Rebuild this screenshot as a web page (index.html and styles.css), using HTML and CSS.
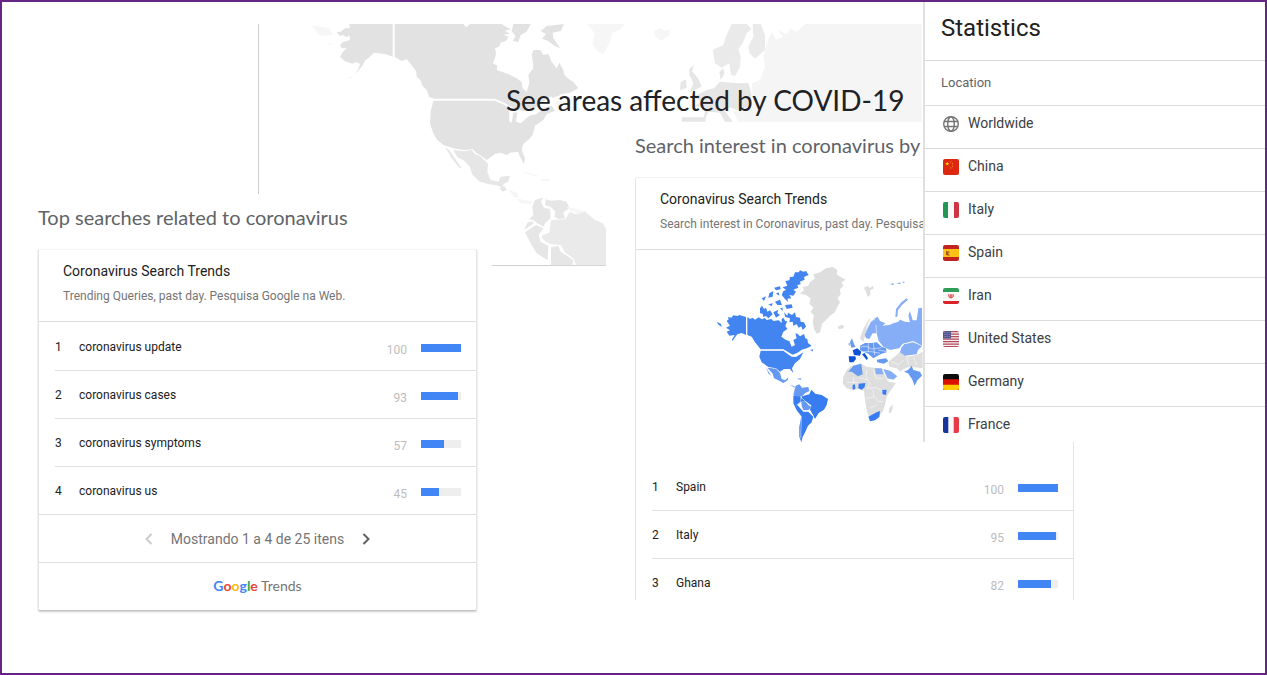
FILE: index.html
```html
<!DOCTYPE html>
<html lang="en">
<head>
<meta charset="utf-8">
<title>COVID-19 search trends</title>
<link rel="stylesheet" href="styles.css">
</head>
<body>
<div class="page">
  <svg class="backdrop" viewBox="24 72 1992 726" aria-hidden="true">
    <path class="line" d="M25.500 72V582M726 796.500H1068"/>
    <g class="land">
      <path d="M298 72H428V170L405 162 385 160 372 158 358 172 345 182 335 200 314 224 326 205 330 192 318 186 308 191 285 184 270 170 279 155 290 144 275 145 270 135 280 126 300 120 298 105 290 112 279 105 270 108 260 96 272 95 285 85 300 84Z"/>
      <path d="M434 72H640L648 82 660 72H755L782 88 765 92 779 101 760 104 776 110 768 122 752 128 747 140 735 145 738 160 735 175 728 190 742 197 740 210 775 222 800 235 815 246 818 265 830 275 838 248 835 225 850 205 848 182 845 165 850 150 870 150 880 165 895 162 905 185 920 205 928 188 940 210 943 225 960 240 970 245 985 265 960 278 930 283 900 290 872 312 850 329 820 334 785 322 762 308 735 296H555L538 292 530 270 518 258 511 240 500 230 498 212 480 190 470 178 455 183 434 171Z"/>
      <path d="M550 302H735L762 314 777 322 778 365 785 368 790 338 802 337 798 365 812 370 838 347 858 343 885 322 905 317 916 332 890 342 880 360 855 377 848 405 838 417 820 432 815 450 825 475 822 492 810 470 805 455 780 458 772 465 750 458 735 462 710 480 690 465 680 460 668 448 640 450 610 445 580 435 560 418 548 395 540 370 542 335Z"/>
      <path d="M790 72H842L830 95 812 105 805 126 788 122 797 108 785 94ZM872 93L890 78 942 72 932 93 908 98 910 115 931 145 915 138 893 122 876 116 888 102ZM895 280L918 274 931 285 908 294Z"/>
      <path class="mid" d="M610 450L640 454 665 450 676 463 690 468 708 485 714 492 712 515 722 540 745 545 752 530 780 527 775 545 762 551 755 562 740 556 715 552 690 545 668 525 662 510 660 500 640 480 622 472ZM585 440L597 450 618 480 635 505 628 503 605 475ZM748 565L762 557 770 570 758 575Z"/>
      <path class="pale" d="M775 568L802 580 806 593 792 590ZM800 596L845 603 844 613 812 610ZM820 513L865 527 860 530 825 519ZM870 537L902 538 900 543 875 543ZM184 76L238 84 250 105 212 108ZM225 126L252 132 240 134ZM285 238L313 226 300 235Z"/>
      <path class="mid" d="M855 600L880 592 873 605 882 623 900 627 902 655 885 670 880 680 860 668 848 659 838 658 850 645 847 620ZM887 598L904 602 930 600 950 605 958 625 940 637 945 655 925 657 914 650 916 634 903 622 885 615ZM832 668L846 664 852 670 830 685 822 690Z"/>
      <path class="mid" d="M825 697L858 675 880 685 866 705 872 725 895 737 893 781 860 760 845 735ZM903 742L925 737 932 755 970 780 968 796H903Z"/>
      <path class="soft" d="M903 660L945 658 960 635 975 642 990 640 1005 634 1014 643 1035 660 1058 670 1068 686V796H978L970 775 945 757 932 735 900 732 892 728 875 715 878 705 898 698Z"/>
      <path class="pale" d="M950 622L972 625 1002 634 990 642 964 633ZM1012 72H1125L1112 88 1087 100 1080 125 1060 162 1042 154 1027 130 1035 102ZM1210 95L1228 84 1244 92 1258 88 1258 106 1234 122 1218 112ZM908 305L950 302 975 295 960 308 924 318Z"/>
      <path class="faint" d="M1550 130L1565 95 1578 118 1600 112 1580 87 1608 102 1620 87 1640 95 1665 72H2016V365H1465L1450 335 1510 320 1505 250 1530 240 1545 200 1540 170Z"/>
      <path class="soft" d="M1445 72H1490L1505 86 1490 100 1478 130 1465 147 1472 170 1470 200 1455 228 1443 225 1438 190 1415 203 1395 190 1388 150 1420 135 1430 105ZM1508 72H1532L1545 105 1545 150 1515 176 1498 160 1495 140 1510 110Z"/>
      <path class="mid" d="M1318 207L1332 195 1326 213 1344 235 1355 260 1320 277 1330 248 1318 225ZM1292 246L1308 238 1310 264 1290 270ZM1408 215L1420 205 1423 222 1412 240ZM1330 290L1370 270 1392 265 1410 245 1465 250 1495 249 1505 285 1495 320 1460 330 1440 322 1425 333 1448 365H1425L1410 338 1375 335 1368 350 1366 365H1295V352H1362L1367 323 1335 318 1352 305Z"/>
    </g>
  </svg>

  <header class="masthead"><h1>See areas affected by COVID-19</h1></header>

  <main class="columns">
    <section class="column column-queries">
      <h2>Top searches related to coronavirus</h2>
      <div class="card card-full">
        <div class="card-head">
          <h3>Coronavirus Search Trends</h3>
          <p>Trending Queries, past day. Pesquisa Google na Web.</p>
        </div>
        <ol class="ranks">
          <li><span class="num">1</span><span class="term">coronavirus update</span><span class="score">100</span><span class="bar"><span class="fill" style="width:100%"></span></span></li>
          <li><span class="num">2</span><span class="term">coronavirus cases</span><span class="score">93</span><span class="bar"><span class="fill" style="width:93%"></span></span></li>
          <li><span class="num">3</span><span class="term">coronavirus symptoms</span><span class="score">57</span><span class="bar"><span class="fill" style="width:57%"></span></span></li>
          <li><span class="num">4</span><span class="term">coronavirus us</span><span class="score">45</span><span class="bar"><span class="fill" style="width:45%"></span></span></li>
        </ol>
        <nav class="pager">
          <button type="button" aria-label="Previous" disabled><svg viewBox="0 0 12 14"><path d="M8.500 2L3.500 7l5 5"/></svg></button>
          <span>Mostrando 1 a 4 de 25 itens</span>
          <button type="button" aria-label="Next"><svg viewBox="0 0 12 14"><path d="M3.500 2l5 5-5 5"/></svg></button>
        </nav>
        <div class="brand"><span class="google"><span class="b">G</span><span class="r">o</span><span class="y">o</span><span class="b">g</span><span class="g">l</span><span class="r">e</span></span> Trends</div>
      </div>
    </section>

    <section class="column column-regions">
      <h2>Search interest in coronavirus by</h2>
      <div class="card card-cut">
        <div class="card-head">
          <h3>Coronavirus Search Trends</h3>
          <p>Search interest in Coronavirus, past day. Pesquisa</p>
        </div>
        <div class="map">
          <svg viewBox="0 0 690 585" role="img" aria-label="Search interest by region">
            <g class="grey">
              <path d="M330 82L345 70 340 58 360 52 378 40 398 36 412 45 410 58 422 66 437 74 424 82 430 92 420 102 422 118 412 130 420 142 412 155 405 172 390 182 378 195 366 206 360 232 350 236 342 222 338 200 342 182 332 170 340 158 328 146 332 130 318 120 300 116 312 106 308 96 325 92Z"/>
              <path d="M413 216L425 209 433 214 428 221 416 222ZM492 98L505 92 508 100 518 93 522 100 510 106 512 118 503 126 498 110ZM480 250L490 222 505 195 512 190 500 215 496 240 490 262Z"/>
              <path d="M575 312L590 300 600 290 625 305 650 300 668 290V340L630 335 615 340 600 350 590 340 568 335 565 322Z"/>
              <path d="M440 345L452 335 480 325 488 330 500 335 530 340 548 342 555 362 565 380 588 384 575 402 560 425 555 450 548 470 535 485 518 497 508 490 500 465 495 435 492 408 478 402 455 404 440 400 428 385 430 365ZM568 460L578 447 578 460 572 475 566 472Z"/>
            </g>
            <g class="b3">
              <path d="M80 198L86 193 84 186 94 188 100 181 112 183 118 180 138 186V240L125 234 112 238 104 248 98 258 96 254 104 240 88 242 80 230 90 226 78 218 90 212ZM50 200L62 206 66 216 56 210Z"/>
              <path d="M142 186L150 192 158 188 165 194 176 187 186 193 194 189 200 195 214 192 220 198 236 196 245 204 245 192 250 188 256 199 262 198 256 212 262 222 250 230 244 245 258 255 268 258 275 275 285 270 280 255 290 250 286 235 292 236 300 244 312 237 316 250 322 252 324 264 335 272 320 280 305 284 295 292 278 300 262 290 250 283H182L165 262 155 245 142 240Z"/>
              <path d="M182 287H250L262 296 275 305 288 306 310 292 300 312 285 325 276 340 280 355 270 342 252 342 240 350 228 340 205 336 185 322 178 305Z"/>
              <path d="M245 120L250 108 258 105 248 97 262 92 256 78 268 76 270 66 280 65 285 52 296 52 300 46 310 50 318 48 326 60 312 66 314 74 300 80 302 88 292 90 295 98 280 104 288 110 280 122 268 120 274 130 262 131 265 142 255 132ZM180 160L186 152 192 162 198 158 202 170 210 166 218 178 205 190 198 183 190 186 188 176 180 175ZM220 172L235 164 232 174 240 180 228 188ZM252 172L262 182 264 173 276 180 285 172 288 186 300 188 302 200 312 202 318 215 308 225 304 214 296 218 290 208 280 212 278 200 268 202 270 190 256 186ZM185 130L198 124 192 138ZM208 115L220 108 218 125 205 128ZM225 140L240 134 246 150 232 150ZM255 150L275 148 278 158 260 162ZM205 148L218 145 215 154ZM222 98L240 94 242 103 228 106ZM228 116L236 112 238 122ZM240 160L248 158 248 168ZM330 285L340 283 338 289Z"/>
            </g>
            <g class="b2">
              <path d="M202 338L228 341 240 354 245 372 255 376 265 367 263 376 250 384 235 376 222 370 218 356ZM198 338L214 362 206 356ZM268 388L285 395 284 398ZM290 372L302 370 304 374Z"/>
              <path d="M287 392L298 388 306 398 325 396 328 408 315 415 306 424 292 428 280 420ZM304 440L315 438 325 450 334 456 325 466 310 466 305 452ZM456 250L460 262 466 276 454 278 450 262ZM445 266L450 264 448 274Z"/>
              <path d="M480 272L495 264 515 264 530 262 545 275 558 280 560 292 545 296 530 304 520 310 505 296 490 290 480 285ZM530 314L558 310 565 318 552 326 532 322ZM612 350L625 344 635 332 640 345 660 350 666 362 652 376 644 392 636 372 624 355Z"/>
            </g>
            <g class="b4">
              <path d="M280 422L302 425 302 442 292 450 310 470 325 470 340 485 335 502 324 512 316 530 308 545 304 562 298 545 298 515 304 484 290 466 280 445Z"/>
              <path d="M306 424L328 418 334 404 346 416 365 420 384 432 380 450 372 464 356 474 345 492 337 476 330 464 334 452 315 438 302 440ZM476 386L496 384 494 396 485 404 475 400ZM458 390L465 388 466 402 458 404ZM546 405L560 404 558 420 548 418ZM505 485L530 472 540 468 538 486 525 496 510 499Z"/>
            </g>
            <path class="b1" d="M494 238L500 222 512 200 525 190 533 185 540 198 556 205 548 212 568 210 582 204 595 200 600 194 615 200 630 202 625 182 630 168 638 196 650 196 655 160 666 158V272L640 258 608 266 598 280 570 285 550 275 536 258 530 235 518 235 508 252 498 250ZM604 278L612 268 640 262 666 274 654 285 650 298 615 302 600 292ZM586 186L588 162 604 142 620 130 624 134 606 150 594 166 592 185ZM570 87L582 85 580 91ZM590 86L600 82 602 88ZM606 80L614 80 612 85ZM525 340H545L550 358H528ZM550 342L572 348 592 364 580 374 562 370Z"/>
            <path class="b2" d="M445 350L460 332 484 326 488 358 474 364 455 350Z"/>
            <path class="b5" d="M446 304L466 304 468 312 460 322 448 322ZM458 286L472 280 484 290 480 302 462 300ZM486 298L494 294 504 310 500 315Z"/>
            <path class="borders" d="M139.500 184V240M182 285H250L264 292 276 300 300 296M302 425L315 438 334 452M302 440L290 450M310 466L325 468 340 482M304 484L302 550M494 238L512 200 525 192M530 235L528 210M500 345L498 365 510 385 502 400M520 345L528 370 550 370M440 382H475M500 400L530 398 548 410M498 430L525 425 535 440 550 440M510 460L530 450M502 375L480 368M460 365L462 385M518 405L522 425M576 320L595 330 610 315M620 302L625 330M640 305L650 330M480 276L500 274 515 282 545 278M490 290L515 290 540 295M505 264V290M520 264L524 300M535 285L565 290"/>
          </svg>
        </div>
        <ol class="ranks">
          <li><span class="num">1</span><span class="term">Spain</span><span class="score">100</span><span class="bar"><span class="fill" style="width:100%"></span></span></li>
          <li><span class="num">2</span><span class="term">Italy</span><span class="score">95</span><span class="bar"><span class="fill" style="width:95%"></span></span></li>
          <li><span class="num">3</span><span class="term">Ghana</span><span class="score">82</span><span class="bar"><span class="fill" style="width:82%"></span></span></li>
        </ol>
      </div>
    </section>
  </main>

  <aside class="stats">
    <h2>Statistics</h2>
    <table>
      <thead><tr><th scope="col">Location</th></tr></thead>
      <tbody>
        <tr><td><div class="place"><svg viewBox="0 0 16 16" class="globe"><circle cx="8" cy="8" r="7.300"/><ellipse cx="8" cy="8" rx="3.300" ry="7.300"/><path d="M1.300 5.500H14.700M1.300 10.500H14.700"/></svg>Worldwide</div></td></tr>
        <tr><td><div class="place"><svg viewBox="0 0 16 16" class="flag"><path fill="#de2910" d="M0 0h16v16H0z"/><path fill="#ffde00" d="M4.200 2.700l.5 1.400h1.500L5 5l.5 1.500-1.300-.9-1.300.9.500-1.500-1.200-.9h1.500z"/><path fill="#f39a20" d="M7.300 2.500h1v1h-1zM9 4.200h1v1H9zM9 6.700h1v1H9zM7.300 8.500h1v1h-1z"/></svg>China</div></td></tr>
        <tr><td><div class="place"><svg viewBox="0 0 16 16" class="flag"><path fill="#f8f8f8" d="M0 0h16v16H0z"/><path fill="#249655" d="M0 0h5v16H0z"/><path fill="#cf3443" d="M11 0h5v16h-5z"/></svg>Italy</div></td></tr>
        <tr><td><div class="place"><svg viewBox="0 0 16 16" class="flag"><path fill="#c2231f" d="M0 0h16v16H0z"/><path fill="#fcc314" d="M0 4h16v8H0z"/><path fill="#a8522b" d="M3 6h1v4H3zM4 6.500h2.500v1H5.500v2h1v1H4z"/></svg>Spain</div></td></tr>
        <tr><td><div class="place"><svg viewBox="0 0 16 16" class="flag"><path fill="#f8f8f8" d="M0 0h16v16H0z"/><path fill="#2f9d58" d="M0 0h16v4H0z"/><path fill="#dc2329" d="M0 13h16v3H0z"/><path fill="none" stroke="#dc4548" d="M5.800 6.200a2.500 2.500 0 1 0 4.400 0M8 6v4M7 6.500v3M9 6.500v3"/></svg>Iran</div></td></tr>
        <tr><td><div class="place"><svg viewBox="0 0 16 16" class="flag"><path fill="#f5eff0" d="M0 0h16v16H0z"/><path stroke="#b44a5a" stroke-width="1.200" d="M0 .6h16M0 3.100h16M0 5.600h16M0 8.100h16M0 10.600h16M0 13.100h16M0 15.500h16"/><path fill="#55568d" d="M0 0h8v7.500H0z"/><path stroke="#a9a9c9" stroke-width=".7" stroke-dasharray=".7 1" d="M1 1.500h6M1 3.500h6M1 5.500h6"/></svg>United States</div></td></tr>
        <tr><td><div class="place"><svg viewBox="0 0 16 16" class="flag"><path fill="#0d0d0d" d="M0 0h16v16H0z"/><path fill="#dd1100" d="M0 5.300h16V16H0z"/><path fill="#fc0" d="M0 10.700h16V16H0z"/></svg>Germany</div></td></tr>
        <tr><td><div class="place"><svg viewBox="0 0 16 16" class="flag"><path fill="#f8f8f8" d="M0 0h16v16H0z"/><path fill="#17359b" d="M0 0h5.300v16H0z"/><path fill="#e63a46" d="M10.700 0H16v16h-5.300z"/></svg>France</div></td></tr>
      </tbody>
    </table>
  </aside>
</div>
</body>
</html>
```
FILE: styles.css
```css
* { box-sizing: border-box; }
body { margin: 0; background: #fff; font-family: Roboto, "Liberation Sans", sans-serif; color: #212121; }
h1, h2, h3, p, ol { margin: 0; padding: 0; font-weight: 400; }
ol { list-style: none; }
svg { display: block; }

.page { position: relative; min-height: 100vh; border: 2px solid #662483; overflow: hidden; }

.backdrop { position: absolute; left: 256px; top: 22px; width: 664px; }
.line { fill: none; stroke: #d0d0d0; stroke-width: 3; }
.land { fill: #e2e2e2; }
.mid { fill: #e6e6e6; }
.soft { fill: #eaeaea; }
.pale { fill: #f6f6f6; }
.faint { fill: #f5f5f5; }

.masthead { position: relative; padding: 80px 0 0 504px; }
h1 { font: 400 28px/36px Lato, Roboto, sans-serif; white-space: nowrap; color: #202124; }

.columns { position: relative; display: grid; grid-template-columns: 1fr 1fr; gap: 158px; padding: 11px 191px 0 36px; align-items: start; }
.column { min-width: 0; }
.column-queries { padding-top: 72px; }
.column h2 { font: 400 20px/24px Lato, Roboto, sans-serif; color: #5f6368; white-space: nowrap; padding: 4px 0 0; margin-bottom: 20px; }

.card { border: 1px solid #e4e4e4; border-top-color: #f4f4f4; border-radius: 2px; }
.card-full { background: #fff; border-bottom-color: #c4c4c4; box-shadow: 0 1px 2px #ccc; }
.card-cut { border-bottom: 0; border-radius: 2px 2px 0 0; }
.card-head { height: 72px; padding: 11px 24px; border-bottom: 1px solid #dedede; white-space: nowrap; overflow: hidden; }
.card-head h3 { font-size: 14px; line-height: 20px; }
.card-head p { margin-top: 7px; font-size: 12px; line-height: 16px; color: #757575; }

.ranks { padding-left: 16px; }
.ranks li { display: flex; height: 48px; padding: 4px 15px 0 0; border-bottom: 1px solid #e0e0e0; font-size: 12px; line-height: 40px; }
.card-full .ranks li:first-child { height: 49px; padding-top: 5px; }
.card-full .ranks li:last-child { border-bottom: 0; height: 47px; }
.card-cut .ranks li:last-child { border-bottom: 0; height: 41px; }
.num { width: 24px; }
.term { flex: 1; }
.score { padding: 3px 14px 0 0; font-size: 12px; color: #bdbdbd; }
.bar { width: 40px; height: 8px; margin-top: 17px; background: #eee; }
.fill { display: block; height: 100%; background: #4285f4; }

.pager { display: flex; justify-content: center; align-items: center; gap: 16px; height: 48px; border-top: 1px solid #dedede; color: #757575; font-size: 14px; }
.pager button { padding: 0; border: 0; background: none; }
.pager svg { width: 12px; height: 14px; fill: none; stroke: #616161; stroke-width: 2; }
.pager button:disabled svg { stroke: #ccc; }
.brand { height: 48px; border-top: 1px solid #dedede; text-align: center; font-family: Lato, sans-serif; font-size: 14px; line-height: 46px; color: #757575; }
.google { font-weight: 700; }
.b { color: #4285f4; }
.r { color: #ea4335; }
.y { color: #fbbc05; }
.g { color: #34a853; }

.map { height: 213px; padding: 5px 0 0 64px; }
.map svg { width: 230px; height: 195px; }
.grey { fill: #dedede; }
.b1 { fill: #86aef7; }
.b2 { fill: #6699f2; }
.b3 { fill: #4285f0; }
.b4 { fill: #377cf0; }
.b5 { fill: #0d52d8; }
.borders { fill: none; stroke: #fff; stroke-width: 2; opacity: .8; }

.stats { position: absolute; top: 0; right: 0; width: 342px; max-width: 100%; height: 440px; overflow: hidden; background: #fff; border-left: 2px solid #e0e0e0; }
.stats h2 { height: 59px; padding: 10px 16px; font-size: 24px; line-height: 32px; border-bottom: 1px solid #dadce0; }
.stats table { width: 100%; border-collapse: separate; border-spacing: 0; }
.stats th { height: 45px; padding: 0 16px 2px; text-align: left; font-size: 13px; font-weight: 400; color: #5f6368; border-bottom: 1px solid #dadce0; }
.stats td { height: 43px; padding: 0 18px 8px; border-bottom: 1px solid #dadce0; }
.stats tr:last-child td { padding-bottom: 9px; border-bottom: 0; }
.place { display: flex; align-items: center; gap: 9px; font-size: 14px; line-height: 20px; color: #3c4043; }
.place svg { width: 16px; height: 16px; margin-top: 2px; }
.flag { border-radius: 2px; }
.globe { fill: none; stroke: #757575; stroke-width: 1.4px; }
```
